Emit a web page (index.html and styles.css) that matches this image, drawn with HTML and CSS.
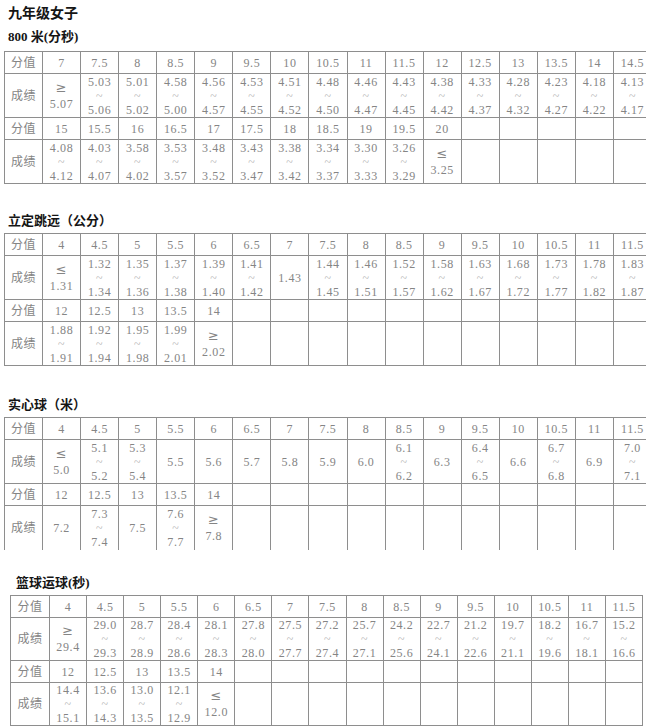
FILE: index.html
```html
<!DOCTYPE html>
<html lang="zh">
<head>
<meta charset="utf-8">
<title>九年级女子</title>
<link rel="stylesheet" href="styles.css">
</head>
<body>
<div class="page">
  <h1 class="grade">九年级女子</h1>

  <section class="sec s1">
    <h2 class="sec-title">800 米(分秒)</h2>
    <table class="grid">
      <tr class="h"><td class="lbl">分值</td><td>7</td><td>7.5</td><td>8</td><td>8.5</td><td>9</td><td>9.5</td><td>10</td><td>10.5</td><td>11</td><td>11.5</td><td>12</td><td>12.5</td><td>13</td><td>13.5</td><td>14</td><td>14.5</td></tr>
      <tr class="d"><td class="lbl">成绩</td><td class="st"><span class="cmp">≥</span><br>5.07</td><td class="rg">5.03<br><span class="tl">~</span><br>5.06</td><td class="rg">5.01<br><span class="tl">~</span><br>5.02</td><td class="rg">4.58<br><span class="tl">~</span><br>5.00</td><td class="rg">4.56<br><span class="tl">~</span><br>4.57</td><td class="rg">4.53<br><span class="tl">~</span><br>4.55</td><td class="rg">4.51<br><span class="tl">~</span><br>4.52</td><td class="rg">4.48<br><span class="tl">~</span><br>4.50</td><td class="rg">4.46<br><span class="tl">~</span><br>4.47</td><td class="rg">4.43<br><span class="tl">~</span><br>4.45</td><td class="rg">4.38<br><span class="tl">~</span><br>4.42</td><td class="rg">4.33<br><span class="tl">~</span><br>4.37</td><td class="rg">4.28<br><span class="tl">~</span><br>4.32</td><td class="rg">4.23<br><span class="tl">~</span><br>4.27</td><td class="rg">4.18<br><span class="tl">~</span><br>4.22</td><td class="rg">4.13<br><span class="tl">~</span><br>4.17</td></tr>
      <tr class="h"><td>分值</td><td>15</td><td>15.5</td><td>16</td><td>16.5</td><td>17</td><td>17.5</td><td>18</td><td>18.5</td><td>19</td><td>19.5</td><td>20</td><td></td><td></td><td></td><td></td><td></td></tr>
      <tr class="d"><td>成绩</td><td class="rg">4.08<br><span class="tl">~</span><br>4.12</td><td class="rg">4.03<br><span class="tl">~</span><br>4.07</td><td class="rg">3.58<br><span class="tl">~</span><br>4.02</td><td class="rg">3.53<br><span class="tl">~</span><br>3.57</td><td class="rg">3.48<br><span class="tl">~</span><br>3.52</td><td class="rg">3.43<br><span class="tl">~</span><br>3.47</td><td class="rg">3.38<br><span class="tl">~</span><br>3.42</td><td class="rg">3.34<br><span class="tl">~</span><br>3.37</td><td class="rg">3.30<br><span class="tl">~</span><br>3.33</td><td class="rg">3.26<br><span class="tl">~</span><br>3.29</td><td class="st"><span class="cmp">≤</span><br>3.25</td><td></td><td></td><td></td><td></td><td></td></tr>
    </table>
  </section>

  <section class="sec s2">
    <h2 class="sec-title">立定跳远（公分）</h2>
    <table class="grid">
      <tr class="h"><td class="lbl">分值</td><td>4</td><td>4.5</td><td>5</td><td>5.5</td><td>6</td><td>6.5</td><td>7</td><td>7.5</td><td>8</td><td>8.5</td><td>9</td><td>9.5</td><td>10</td><td>10.5</td><td>11</td><td>11.5</td></tr>
      <tr class="d"><td>成绩</td><td class="st"><span class="cmp">≤</span><br>1.31</td><td class="rg">1.32<br><span class="tl">~</span><br>1.34</td><td class="rg">1.35<br><span class="tl">~</span><br>1.36</td><td class="rg">1.37<br><span class="tl">~</span><br>1.38</td><td class="rg">1.39<br><span class="tl">~</span><br>1.40</td><td class="rg">1.41<br><span class="tl">~</span><br>1.42</td><td>1.43</td><td class="rg">1.44<br><span class="tl">~</span><br>1.45</td><td class="rg">1.46<br><span class="tl">~</span><br>1.51</td><td class="rg">1.52<br><span class="tl">~</span><br>1.57</td><td class="rg">1.58<br><span class="tl">~</span><br>1.62</td><td class="rg">1.63<br><span class="tl">~</span><br>1.67</td><td class="rg">1.68<br><span class="tl">~</span><br>1.72</td><td class="rg">1.73<br><span class="tl">~</span><br>1.77</td><td class="rg">1.78<br><span class="tl">~</span><br>1.82</td><td class="rg">1.83<br><span class="tl">~</span><br>1.87</td></tr>
      <tr class="h"><td>分值</td><td>12</td><td>12.5</td><td>13</td><td>13.5</td><td>14</td><td></td><td></td><td></td><td></td><td></td><td></td><td></td><td></td><td></td><td></td><td></td></tr>
      <tr class="d"><td>成绩</td><td class="rg">1.88<br><span class="tl">~</span><br>1.91</td><td class="rg">1.92<br><span class="tl">~</span><br>1.94</td><td class="rg">1.95<br><span class="tl">~</span><br>1.98</td><td class="rg">1.99<br><span class="tl">~</span><br>2.01</td><td class="st"><span class="cmp">≥</span><br>2.02</td><td></td><td></td><td></td><td></td><td></td><td></td><td></td><td></td><td></td><td></td><td></td></tr>
    </table>
  </section>

  <section class="sec s3">
    <h2 class="sec-title">实心球（米）</h2>
    <table class="grid open">
      <tr class="h"><td class="lbl">分值</td><td>4</td><td>4.5</td><td>5</td><td>5.5</td><td>6</td><td>6.5</td><td>7</td><td>7.5</td><td>8</td><td>8.5</td><td>9</td><td>9.5</td><td>10</td><td>10.5</td><td>11</td><td>11.5</td></tr>
      <tr class="d"><td>成绩</td><td class="st"><span class="cmp">≤</span><br>5.0</td><td class="rg">5.1<br><span class="tl">~</span><br>5.2</td><td class="rg">5.3<br><span class="tl">~</span><br>5.4</td><td>5.5</td><td>5.6</td><td>5.7</td><td>5.8</td><td>5.9</td><td>6.0</td><td class="rg">6.1<br><span class="tl">~</span><br>6.2</td><td>6.3</td><td class="rg">6.4<br><span class="tl">~</span><br>6.5</td><td>6.6</td><td class="rg">6.7<br><span class="tl">~</span><br>6.8</td><td>6.9</td><td class="rg">7.0<br><span class="tl">~</span><br>7.1</td></tr>
      <tr class="h"><td>分值</td><td>12</td><td>12.5</td><td>13</td><td>13.5</td><td>14</td><td></td><td></td><td></td><td></td><td></td><td></td><td></td><td></td><td></td><td></td><td></td></tr>
      <tr class="d last"><td>成绩</td><td>7.2</td><td class="rg">7.3<br><span class="tl">~</span><br>7.4</td><td>7.5</td><td class="rg">7.6<br><span class="tl">~</span><br>7.7</td><td class="st"><span class="cmp">≥</span><br>7.8</td><td></td><td></td><td></td><td></td><td></td><td></td><td></td><td></td><td></td><td></td><td></td></tr>
    </table>
  </section>

  <section class="sec s4">
    <h2 class="sec-title">篮球运球(秒)</h2>
    <table class="grid narrow">
      <tr class="h"><td class="lbl">分值</td><td>4</td><td>4.5</td><td>5</td><td>5.5</td><td>6</td><td>6.5</td><td>7</td><td>7.5</td><td>8</td><td>8.5</td><td>9</td><td>9.5</td><td>10</td><td>10.5</td><td>11</td><td>11.5</td></tr>
      <tr class="d"><td>成绩</td><td class="st"><span class="cmp">≥</span><br>29.4</td><td class="rg">29.0<br><span class="tl">~</span><br>29.3</td><td class="rg">28.7<br><span class="tl">~</span><br>28.9</td><td class="rg">28.4<br><span class="tl">~</span><br>28.6</td><td class="rg">28.1<br><span class="tl">~</span><br>28.3</td><td class="rg">27.8<br><span class="tl">~</span><br>28.0</td><td class="rg">27.5<br><span class="tl">~</span><br>27.7</td><td class="rg">27.2<br><span class="tl">~</span><br>27.4</td><td class="rg">25.7<br><span class="tl">~</span><br>27.1</td><td class="rg">24.2<br><span class="tl">~</span><br>25.6</td><td class="rg">22.7<br><span class="tl">~</span><br>24.1</td><td class="rg">21.2<br><span class="tl">~</span><br>22.6</td><td class="rg">19.7<br><span class="tl">~</span><br>21.1</td><td class="rg">18.2<br><span class="tl">~</span><br>19.6</td><td class="rg">16.7<br><span class="tl">~</span><br>18.1</td><td class="rg">15.2<br><span class="tl">~</span><br>16.6</td></tr>
      <tr class="h"><td>分值</td><td>12</td><td>12.5</td><td>13</td><td>13.5</td><td>14</td><td></td><td></td><td></td><td></td><td></td><td></td><td></td><td></td><td></td><td></td><td></td></tr>
      <tr class="d"><td>成绩</td><td class="rg">14.4<br><span class="tl">~</span><br>15.1</td><td class="rg">13.6<br><span class="tl">~</span><br>14.3</td><td class="rg">13.0<br><span class="tl">~</span><br>13.5</td><td class="rg">12.1<br><span class="tl">~</span><br>12.9</td><td class="st"><span class="cmp">≤</span><br>12.0</td><td></td><td></td><td></td><td></td><td></td><td></td><td></td><td></td><td></td><td></td><td></td></tr>
    </table>
  </section>
</div>
</body>
</html>
```

FILE: styles.css
```css
html, body {
  margin: 0;
  padding: 0;
  background: #fff;
  overflow: hidden;
}

body {
  font-family: "Liberation Serif", "Noto Sans CJK SC", serif;
  color: #858585;
}

.page {
  padding: 3px 0 0 4px;
}

.grade {
  margin: 0 0 0 4px;
  font: bold 14px/18px "Noto Sans CJK SC", sans-serif;
  color: #151515;
}

.sec-title {
  margin: 0 0 3px 4px;
  font: bold 13px/18px "Liberation Serif", "Noto Sans CJK SC", serif;
  color: #151515;
}

.s1 .sec-title { margin-top: 7px; margin-bottom: 5px; }
.s2 .sec-title { margin-top: 28px; }
.s3 .sec-title { margin-top: 30px; }
.s4 .sec-title { margin-top: 24px; margin-left: 12px; }

.grid {
  width: 648px;
  table-layout: fixed;
  border-collapse: collapse;
  font-size: 12px;
  letter-spacing: 0.6px;
}

.grid.narrow {
  width: 633px;
  margin-left: 6px;
}

.grid td {
  padding: 0;
  border: 1px solid #8e8e8e;
  text-align: center;
  vertical-align: middle;
  white-space: nowrap;
  overflow: hidden;
}

.grid .lbl {
  width: 37px;
}

.grid.narrow .lbl {
  width: 38px;
}

.grid tr.h {
  height: 22px;
  line-height: 14px;
}

.grid tr.d {
  height: 44px;
  line-height: 14px;
}

.grid.narrow tr.d {
  height: 42px;
}

.grid td.rg {
  line-height: 14px;
}

.grid td.st {
  line-height: 16px;
}

.cmp {
  font-family: "DejaVu Sans", sans-serif;
  font-size: 13px;
}

.tl {
  color: #b3b3b3;
}

.grid.open tr.last td {
  border-bottom-color: transparent;
}
```
